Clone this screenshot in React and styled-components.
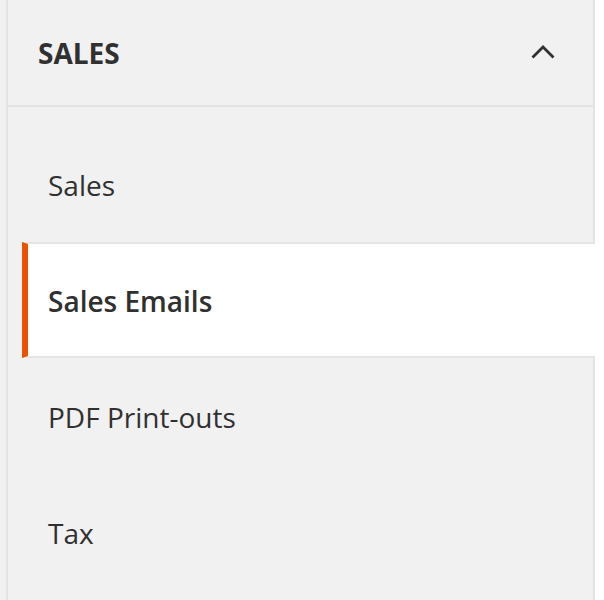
import React from "react";
import styled, { createGlobalStyle } from "styled-components";

const GlobalStyle = createGlobalStyle`
  html, body {
    margin: 0;
    padding: 0;
    background: #ffffff;
  }
  body {
    font-family: "Open Sans", "Liberation Sans", sans-serif;
    color: #303030;
    -webkit-font-smoothing: antialiased;
  }
  * { box-sizing: border-box; }
`;

const Page = styled.div`
  padding-left: 6px;
  width: 604px;
  height: 600px;
  overflow: hidden;
  background: linear-gradient(to right, #f1f1f1 6px, #ffffff 6px);
`;

const Nav = styled.nav`
  width: 589px;
  background: #f1f1f1;
  border: 2px solid #e3e3e3;
  border-top: 0;
  padding-bottom: 40px;
`;

const Header = styled.div`
  display: flex;
  align-items: center;
  justify-content: space-between;
  height: 107px;
  padding: 0 38px 0 30px;
  border-bottom: 2px solid #e3e3e3;
`;

const Title = styled.strong`
  font-size: 28px;
  font-weight: 700;
  line-height: 32px;
  text-transform: uppercase;
  color: #303030;
`;

const Chevron = styled.svg`
  display: block;
  width: 24px;
  height: 14px;
  margin-top: -2px;
`;

const Items = styled.ul`
  list-style: none;
  margin: 0 0 0 14px;
  padding: 19px 0 0 0;
  display: flex;
  flex-direction: column;
`;

const Item = styled.li`
  position: relative;
  z-index: ${(p) => (p.$active ? 1 : 0)};
  margin-right: ${(p) => (p.$active ? "-2px" : "0")};
  padding: 41px 20px 39px 20px;
  border-top: 2px solid ${(p) => (p.$active ? "#e3e3e3" : "transparent")};
  border-bottom: 2px solid ${(p) => (p.$active ? "#e3e3e3" : "transparent")};
  border-left: 6px solid ${(p) => (p.$active ? "#eb5202" : "transparent")};
  background: ${(p) => (p.$active ? "#ffffff" : "transparent")};
  font-size: 28px;
  line-height: 32px;
  font-weight: ${(p) => (p.$active ? 600 : 400)};
  color: #303030;
`;

const items = [
  { label: "Sales" },
  { label: "Sales Emails", active: true },
  { label: "PDF Print-outs" },
  { label: "Tax" },
];

export default function App() {
  return (
    <>
      <GlobalStyle />
      <Page>
        <Nav>
          <Header>
            <Title>Sales</Title>
            <Chevron viewBox="0 0 24 14" aria-hidden="true">
              <polyline
                points="1.5,12.5 12,2 22.5,12.5"
                fill="none"
                stroke="#303030"
                strokeWidth="2.8"
              />
            </Chevron>
          </Header>
          <Items>
            {items.map((it) => (
              <Item key={it.label} $active={it.active}>
                {it.label}
              </Item>
            ))}
          </Items>
        </Nav>
      </Page>
    </>
  );
}
